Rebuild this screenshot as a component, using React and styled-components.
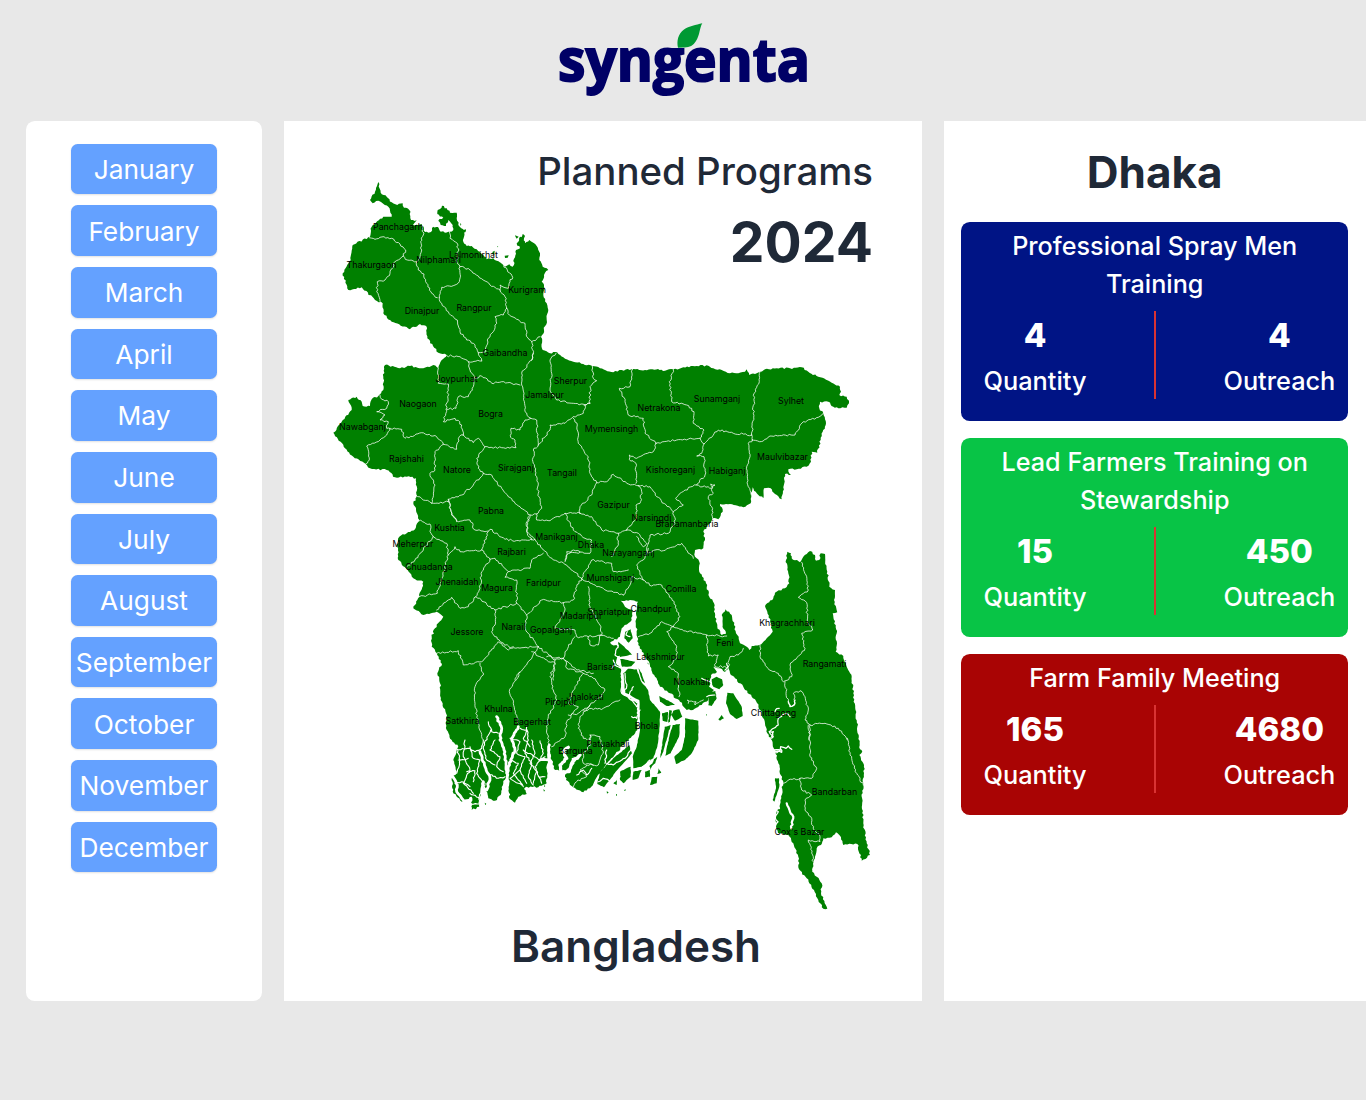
import React from "react";
import styled, { createGlobalStyle } from "styled-components";

const GlobalStyle = createGlobalStyle`
  *, *::before, *::after { box-sizing: border-box; }
  html, body { margin: 0; padding: 0; background: #fff; }
  body {
    overflow: hidden;
    color: #1f2937;
    font-family: Inter, "Liberation Sans", sans-serif;
  }
`;

const Page = styled.div`
  width: 1366px;
  height: 1100px;
  overflow: hidden;
  background: #e8e8e8;
`;

const Header = styled.header`
  height: 121px;
  padding-top: 10px;
  display: flex;
  justify-content: center;
`;

const LogoSvg = styled.svg`
  display: block;
  width: 290px;
  height: 100px;
  margin-left: 4px;
`;

const LogoText = styled.text`
  font-family: "Open Sans", "Noto Sans", sans-serif;
  font-weight: 700;
  font-size: 59px;
  fill: #000066;
  stroke: #000066;
  stroke-width: 2px;
`;

const Columns = styled.main`
  display: grid;
  grid-template-columns: 236px 638px 422px;
  column-gap: 22px;
  height: 880px;
  margin-left: 26px;
`;

const Sidebar = styled.nav`
  display: flex;
  flex-direction: column;
  align-items: center;
  gap: 11px;
  padding-top: 22.8px;
  background: #fff;
  border-radius: 8.8px;
`;

const MonthButton = styled.button`
  flex: none;
  width: 146px;
  height: 50.64px;
  padding: 0.8px 0 0;
  border: 0;
  border-radius: 6.6px;
  background: #64a1ff;
  color: #fff;
  font-family: inherit;
  font-size: 26.3px;
  font-weight: 400;
  line-height: 35.2px;
  box-shadow: 0 1px 2px rgba(0, 0, 0, 0.12);
`;

const MapPanel = styled.section`
  display: grid;
  grid-template-columns: 1fr;
  grid-template-rows: 155px 1fr;
  background: #fff;
`;

const PanelHeading = styled.div`
  grid-area: 1 / 1;
  z-index: 1;
  padding: 24px 49px 0 0;
  text-align: right;
`;

const Title = styled.div`
  font-size: 38.4px;
  font-weight: 500;
  line-height: 52px;
`;

const Year = styled.div`
  margin-top: 12px;
  font-size: 55.2px;
  font-weight: 700;
  line-height: 66px;
`;

const MapSvg = styled.svg`
  grid-area: 1 / 1 / span 2 / 1;
  display: block;
  width: 560px;
  height: 750px;
  margin: 49px 0 0 36px;
`;

const Land = styled.path`
  fill: #008000;
`;

const Border = styled.path`
  fill: none;
  stroke: #fff;
  stroke-width: ${(p) => p.$width || 0.85}px;
  stroke-opacity: ${(p) => (p.$width ? 1 : 0.9)};
  stroke-linejoin: round;
  stroke-linecap: round;
`;

const District = styled.text`
  fill: #000;
  font-family: Inter, sans-serif;
  font-size: 8.8px;
  text-anchor: middle;
`;

const Country = styled.div`
  grid-area: 2 / 1;
  align-self: end;
  z-index: 1;
  padding: 0 0 25px 66px;
  font-size: 44px;
  font-weight: 600;
  line-height: 60px;
  text-align: center;
`;

const Summary = styled.aside`
  display: flex;
  flex-direction: column;
  gap: 17px;
  padding: 21px 17.6px 0 17px;
  background: #fff;
`;

const Division = styled.h1`
  margin: 0;
  height: 63px;
  font-size: 44px;
  font-weight: 700;
  line-height: 61px;
  text-align: center;
`;

const Card = styled.article`
  padding: 5px 13px 22px;
  border-radius: 8.8px;
  background: ${(p) => p.$color};
  color: #fff;
`;

const CardTitle = styled.h2`
  margin: 0 auto;
  max-width: 340px;
  font-size: 25.2px;
  font-weight: 500;
  line-height: 38px;
  text-align: center;
`;

const Stats = styled.div`
  display: grid;
  grid-template-columns: 1fr 2px 1fr;
  grid-template-rows: 88px;
  justify-items: start;
  height: 88px;
  margin: 8px 0 0 1px;
`;

const Divider = styled.i`
  width: 2px;
  background: #d93333;
`;

const Stat = styled.div`
  display: flex;
  flex-direction: column;
  align-items: center;
  width: ${(p) => p.$width}px;
  justify-self: ${(p) => p.$side};
  padding-top: 2px;
  font-size: 25.3px;
  font-weight: 500;
  line-height: 45px;

  strong {
    font-size: 33px;
    font-weight: 800;
    line-height: 45px;
  }
`;

const MONTHS = ["January", "February", "March", "April", "May", "June", "July",
  "August", "September", "October", "November", "December"];

const PROGRAMS = [
  { title: "Professional Spray Men Training", color: "#001485", quantity: 4, outreach: 4 },
  { title: "Lead Farmers Training on Stewardship", color: "#08c446", quantity: 15, outreach: 450 },
  { title: "Farm Family Meeting", color: "#a90404", quantity: 165, outreach: 4680 },
];

const MAINLAND = `378.3,182 380.7,192.7 386.7,196.7 391.7,202.3 397.3,205 402.7,203.3 404,207.7 409.3,210 411,220 416.7,220
413,225 418,225 421.7,224 424,227 425,232 428.3,232.7 431,232 433,226.7 438,227 440.7,231.7 445,232.7 450,231.7 453.3,230 452.7,225
448.3,220 446,226 440.7,225 438.3,220.7 443.3,217.7 437.3,214 437.7,210 440,209 442,205.7 446.7,208.3 450,212.7 456.7,212.7
456.7,218.3 458.3,225 463.3,229.3 464,236.7 463.3,241.7 466.7,246 471.7,246 476.7,249.3 483.3,255 486.7,259.3 493.3,258.3
496.7,260.7 501.7,263.3 505,266.7 509.3,264.3 512.7,266.7 515,257.3 516,250 520,248.3 516.7,243.3 520,236.7 524,238.3
525,243.3 529.3,240 533.3,242.7 536.7,246 540,253.3 539.3,260 542.7,266.7 548.3,270 544,275 541.7,281.7 544,286.7 543.3,295
546.7,303.3 548.3,310 546.7,320 544,330 541,337 542.7,350 550,353.3 555,352 563.3,357.3 573.3,361.7 583.3,364 592.3,366
600,368.3 613.3,372.3 621.7,370 631.7,369.3 645,370 658,369 665,370.7 673.3,369.3 683.3,367.3 696.7,366 708.3,365.7
713.3,368.3 721.7,370 730,373.3 738.3,373.3 745,371.7 746.7,369.3 749.3,375 755,374 760,371.7 765,369.3 776.7,368.3 790,368.3
801.7,367.3 808.3,371.7 818.3,376.7 831.7,382.7 840,386.7 841,391.7 839.3,395 846.7,396.7 849,403.3 846.7,407.7 838.3,408.3
833.3,406.7 828.3,401.7 820,401.7 819.3,408.3 823.3,413.3 826,423.3 822.7,431.7 820.7,440 817.3,452.7 811.7,451.7 811,461.7
806.7,466.7 796.7,469.3 788.3,469.3 791,475 785,474 784.3,483.3 781.7,499.3 775,494 770.7,488.3 764,488.3 763.3,498.3
756.7,493.3 752.7,487.3 751.3,495 750.7,503.3 743.3,507.3 730,504 720,504 722.7,511.7 718.3,519.3 712.7,518.3 710,523.3
703.3,531.7 705,540 703.3,548.3 695,550 695,556.7 699.3,561.7 700,573.3 706,583.3 709.3,596.7 714,603.3 715,613.3 717.3,626.7
721.7,635 725.7,634 722.7,625 721.7,615 725.7,609.3 731.7,615 734,625 737.3,635 740,643.3 746.7,646.7 749.3,650 751.7,646
759.3,645 766.7,638.3 772.7,631.7 770.7,623.3 767.3,611.7 765,606 773.3,598.3 775,592.7 785,588.3 789.3,583.3 788.3,573.3
786,560 787.3,551.7 791,553.3 791.7,558.3 800,562.3 803.3,556.7 810,551 815,555 816,560.7 819.3,560 820.7,553.3 825,554
825.3,560 827.3,571.7 829.3,586.7 835,590 834,600 837.3,612.3 832.7,613.3 836.7,633.3 835.7,651.7 843.3,656 846.7,666.7
851.7,676.7 853.3,693.3 855.5,710 857.3,726.7 860,749.3 862.3,751.7 859.3,755 864,765 863.3,785 861.7,796.7 863.3,823.3
866.7,843.3 870,855 861.7,860.7 857.3,844 843.3,845 841,837.3 836,832.3 831.7,837.3 823.3,838.3 821,845 816.7,848.3
815,856.7 812.7,871.7 816.7,876.7 821.7,883.3 821,893.3 827.3,908.8 823.3,908.8 818.3,900 814,890 806.7,878.3 799,869.3
798.3,856.7 793.3,843.3 788.3,835 778,833 776,826.7 776,816.7 778.3,806 780.7,795 783.3,783.3 780.7,775 778.3,763.3 775,750
771.7,740 767.3,733.3 765,723.3 761.7,713.3 757,703 751.7,696.7 743.3,686.7 735,678.3 730,673.3 729,667 725,672 720,668.3
713.3,666.7 717,672 711,675 709,686.7 714,690 708.3,700 701.7,705 693,710 686.7,710 680,701.7 670,693.3 660,686.7 655,676.7
650,666.7 645,656.7 638.3,645 636.7,633.3 636,613.3 638,601.7 630,600 620.7,600.7 625,606.7 632.7,610 631.7,620 621.7,628.3
620,636.7 610,642.7 618,646.7 625,653.3 617.3,656.7 616,663 621,669 621.5,693.3 629,698 636.6,701.7 637.4,716.7 637.4,730
632,736 625,743.3 610,760 601.7,770 595,780 590,788.3 583.3,792.3 573.3,787.3 566,780 565,775 573.3,765 576.7,758.3
580,755 571.7,758.3 569.3,768.3 561.7,771.7 555,770 551.7,760 549.3,746.7 547.3,760 546.7,783.3 538.3,787.3 526.7,786.7
524,789 526.7,794 518.3,796.7 515,802.7 509.3,798.3 509.3,783.3 507.3,773.3 503.3,783.3 500.7,795 495,800.7 488.3,798.3
485,783.3 480,796.7 479.3,806.7 471.7,810 471.7,796.7 461.7,801.7 452.7,791.7 451.7,778.3 456.7,773.3 453.3,760 458.3,746.7
451.7,740 446.7,730 446,713.3 440.7,700 440,683.3 437.3,673.3 442,664 436.7,653.3 431.7,646.7 431.7,636.7 435,628.3
443.3,616.7 436.7,611.7 423.3,615 413.3,608.3 419.3,596.7 423.3,581.7 413.3,578.3 406,568.3 398.3,560 397.3,546.7 399.3,536.7
406.7,533.3 415,529.3 419.3,520 416,510 413.3,503.3 416.7,496.7 416,478.3 406.7,476.7 395,477.3 386.7,470 370,468.3
365.7,464 353.3,456.7 345,448.3 333.3,432.7 341.7,421.7 351.7,410 348.3,400 356.7,396.7 361.7,401.7 362.7,406 370,406
371.7,399.3 378.3,396 383.3,390 383.3,376.7 385,365 400,368.3 410,366 423.3,368.3 433.3,365 438.3,368.3 441.7,360
446.7,355 438.3,352.7 433,346 427.3,338.3 426.7,326.7 420,324 410,329.3 391.7,321.7 383.3,313.3 382.7,303.3 375,300
361.7,287.3 348.3,290 342.7,273.3 350.7,260 352.7,245 370,236.7 371.7,226.7 383.3,216.7 391.7,216.7 388.3,206.7
378.3,200.7 372.7,203.3 370,200 375,191.7`;

/* Map sheets: coordinates are thirds of a pixel measured from each sheet's origin. */
const ISLANDS = [
  { x: 570, y: 590, lines: [
    "174,236 200,238 214,275 234,300 240,330 270,365 268,420 262,470 250,505 215,530 190,535 188,500 200,470 210,420 208,330 166,308 160,250",
    "345,385 385,392 385,450 365,490 345,510 318,522 313,500 335,480 345,440",
    "308,405 330,402 327,440 302,490 286,497 298,440",
    "284,410 302,405 291,445 280,485 270,505 280,442",
    "268,318 300,335 315,345 290,348 270,335", "310,362 328,358 337,380 315,392 304,375", "276,370 294,366 292,396 278,392",
    "298,360 306,362 300,395 295,398", "262,500 256,520 244,530 252,508",
    "178,465 186,490 142,540 102,592 82,582 90,545 130,505",
    "190,545 215,540 205,565 188,570", "245,562 262,560 260,580 240,585", "266,535 274,548 262,552", "225,545 240,540 240,560 225,562",
    "150,545 182,530 182,560 160,580 150,570", "130,580 142,565 140,585", "238,528 250,518 242,540",
    "472,308 490,310 515,350 518,378 500,387 480,372 468,340",
    "436,303 440,325 425,348 415,346 417,320 425,305", "455,375 462,385 450,392 445,388",
    "425,268 440,260 456,268 460,285 448,298 426,290",
    "166,125 182,118 188,145 176,158 163,145", "145,155 163,170 186,194 150,201 145,178", "150,206 196,215 184,229 156,230",
    "205,235 215,250 225,280 216,272", "408,372 411,374 409,378", "162,600 168,598 165,604", "138,612 141,614 138,617",
  ]},
  { x: 740, y: 700, lines: ["105,235 117,235 118,260 103,305 98,300 108,265"] },
  { x: 320, y: 170, lines: [
    "428,180 438,178 436,187 429,188", "518,245 524,242 523,254 516,252", "554,257 566,256 563,263 555,264", "585,196 596,200 590,206",
    "608,192 615,198 610,212 602,206", "532,228 535,230 532,232", "420,160 424,162 422,168", "368,152 377,153 374,160 367,158",
  ]},
  { x: 420, y: 650, lines: ["194,458 199,461 196,466", "372,405 376,408 373,412", "370,418 375,421 372,425", "560,424 566,427 561,431", "588,432 591,435 588,438"] },
];

const BORDERS = [
  { x: 320, y: 170, lines: [
    "148,203 165,208 180,202 215,205 240,222 257,240 250,258 262,270 290,275",
    "305,168 310,195 302,215 305,240 300,260 290,275 295,300 312,312 320,340 335,370 352,383",
    "250,258 225,275 210,310 195,330 172,335 170,365 185,400",
    "388,185 390,205 412,220 415,265 408,270 420,290 418,335 405,345 365,352 358,383",
    "420,290 450,300 475,318 510,345 540,360",
    "545,280 562,300 578,322 570,335 565,355 540,345 540,360 555,380 560,415",
    "358,383 365,400 385,425 412,450 420,485 440,510 460,520 475,548 485,572",
    "560,415 550,435 525,440 530,460 520,485 502,510 498,545 475,548",
    "560,415 568,435 590,448 615,460 620,500 635,515 660,500",
    "635,515 640,550 635,570", "380,557 420,560 445,575 485,573",
  ]},
  { x: 320, y: 340, lines: [
    "445,65 450,90 465,110 460,140 445,170 415,170 408,205 380,208 370,245 405,235 425,255 430,285",
    "355,85 355,130 385,132 383,170 378,208", "465,115 485,108 515,130 545,125 600,135",
    "640,40 636,60 625,70 605,100 605,135 612,160 615,215 632,235",
    "430,285 460,308 475,295 495,320 545,323 588,323 585,300 572,292 573,265 600,270 615,240 632,235 650,240 652,290 655,315",
    "180,165 185,178 205,185 200,205 170,215 195,225 180,240 205,245 200,265 245,268 255,295 305,278 350,290 370,313 410,328 418,290 430,285",
    "210,265 200,285 180,300 140,318 148,360 137,372", "370,313 345,335 345,390 330,400 345,435 335,490",
    "495,320 470,355 475,385 490,400 460,435 425,465 385,478", "288,465 310,480 340,490 385,485",
    "490,400 510,403 545,445 565,470 600,500 630,525 650,522 665,505 655,460 650,410 640,370 640,330 655,315 690,270 690,255 735,250 755,235 790,220 795,195",
    "708,40 690,60 695,100 690,150 710,180 760,190 795,195 810,190",
    "385,478 395,520 410,545", "630,525 620,545 622,580 635,600", "650,522 650,540 690,542 735,520 780,520",
  ]},
  { x: 530, y: 340, lines: [
    "187,78 190,115 200,122 180,140 180,190 162,195",
    "130,235 142,255 145,310 175,350 180,400 200,428 185,465 150,500 150,520",
    "308,88 300,140 268,145 285,185 295,225 340,235 345,280 378,310",
    "430,88 418,125 425,185 470,195 492,215 490,250 522,270 510,295 440,300 378,310",
    "690,95 688,125 672,160 670,220 665,285", "510,295 522,312 565,270 610,280 665,285",
    "665,300 700,303 720,288 795,285 820,245 865,232 880,220",
    "665,285 668,300 655,310 660,350 650,380 655,440 664,465",
    "522,312 515,340 500,348 522,350 525,405 500,435 545,445 555,435 542,432 550,460 535,470 545,500 548,535",
    "378,310 370,335 320,355 298,345 298,358 318,370 318,430", "200,428 230,425 250,403 290,430 325,437",
    "325,437 360,440 380,470 430,515", "500,435 465,450 437,475 460,495 430,515 435,550 415,580 360,585 355,610",
    "325,437 335,455 330,490 318,495 320,530 290,570", "150,520 185,530 215,570 245,575 265,580 290,570",
    "105,520 130,570 165,595 185,600 180,640 110,635 105,660", "265,580 262,620 245,650",
    "290,570 325,580 350,610 340,620 320,590", "355,610 350,630 355,640 375,630 400,632 455,610 490,655",
  ]},
  { x: 380, y: 500, lines: [
    "205,0 215,45 235,65 270,60 285,90 315,95 330,88 375,118 420,123 465,118 440,95 445,50",
    "465,118 490,150 520,180 550,188 605,235 650,260 730,285", "110,60 150,72 150,95 160,108 130,150 105,180 80,200",
    "160,110 200,130 205,165 180,250 172,280 118,290", "205,165 225,140 240,155 275,152 305,150 325,95",
    "305,150 330,178 345,175 385,215 450,205 455,180 490,160",
    "330,178 305,215 300,265 288,290 265,320 240,325 215,292 170,330", "288,290 345,330 410,310 410,240 375,232 385,215",
    "345,330 345,375 335,395 360,425 395,445 475,440", "410,310 440,345 435,380 445,400 475,440",
    "440,345 485,300 550,308 555,330 525,385 585,390 590,410 625,410", "605,235 590,260 580,300 550,308",
    "625,260 630,320 660,375 665,405 625,410 630,435 655,435 660,405 700,415", "605,235 635,180 695,190 700,215 745,210",
    "555,185 560,165 580,150 600,155", "475,440 525,480 550,475 555,455 585,410", "550,475 590,510 640,520",
    "170,460 235,452 250,495 305,485 355,425 385,450 400,440", "475,440 450,480 415,520 405,540", "525,480 520,540",
  ]},
  { x: 580, y: 530, lines: [
    "205,55 190,90 170,105 190,150 155,140 150,165 130,195", "190,150 215,168 245,165 275,205 300,260 280,290",
    "175,320 210,310 245,275 280,290 300,298 380,315 440,318", "280,290 260,305 290,350 290,385 265,410 295,430 297,500",
    "380,315 385,378 415,375 405,410 445,410 450,380 475,375 490,355", "325,520 322,510 348,515 345,525 370,510",
  ]},
  { x: 710, y: 540, lines: [
    "150,315 150,350 178,390 205,400 220,425 245,410 240,375 285,325 275,280 308,270 292,240 290,188 265,172 295,150 290,110 275,67",
    "225,425 235,490 245,500 255,490 250,460 270,452 285,470 295,510 285,540 300,555 345,550 385,565 412,600", "300,555 297,600",
  ]},
  { x: 740, y: 700, lines: [
    "205,75 210,100 210,170 230,205 215,235 180,235 145,240 128,250",
    "180,235 185,270 215,285 195,300 195,330 215,355 220,385 240,410 240,425 205,420 220,470 218,515",
    "322,115 330,165 350,220 370,255",
  ]},
  { x: 420, y: 650, lines: [
    "180,40 190,75 165,110 165,160 175,220 190,270", "300,65 268,125 280,160 295,220",
    "335,5 380,30 405,40 390,80 400,120 410,150 385,200 380,240 388,290",
    "435,30 440,55 490,70 465,110 445,160 475,170 440,215 435,260 395,290",
    "490,70 515,80 555,120 545,140 510,165 480,200 475,235 490,265 510,270", "490,180 550,175 600,150",
    "445,195 475,190 510,165", "510,270 510,255 540,260 550,310 535,345 500,345 480,360 500,380 470,395 460,410",
    "510,255 512,285 490,310 490,340 520,345", "380,20 430,25",
  ]},
];

const RIVERS = [
  { x: 420, y: 650, width: 1.1, lines: [
    "110,290 120,330 110,370", "135,270 130,320 150,360 130,400 160,430", "150,290 160,325 180,330 170,370 195,400",
    "115,330 145,325", "105,400 125,395 150,410", "110,300 145,295 165,305 185,295 190,270", "205,215 215,245 235,250", "212,240 190,290 200,330 225,345",
    "225,270 210,300 240,320 230,350 250,365", "205,370 235,385 255,380", "140,365 165,362 160,395", "195,400 178,440 180,470",
    "270,265 300,275 290,310 315,320 300,360 320,400", "285,310 270,330 295,340 280,370 310,410", "320,230 325,270 315,310 335,340 325,380 340,405",
    "360,272 370,310 345,350 365,400", "335,270 345,310 330,340 350,365 340,400", "300,360 270,385 295,400 305,405", "310,300 360,330 375,320", "355,380 375,380",
    "300,235 320,240 310,265 330,290", "470,375 490,360 500,375 515,355", "150,430 180,445", "155,463 178,462",
  ]},
  { x: 420, y: 650, width: 2.8, lines: [
    "230,200 245,235 240,270 252,300 258,340 262,380 258,400", "295,230 275,265 285,300 265,350 262,380",
    "180,305 195,350 210,385 200,420", "98,380 112,405 110,425 130,450", "190,395 185,430", "388,285 385,330 360,330",
  ]},
  { x: 420, y: 650, width: 3.2, lines: ["480,315 455,340 448,365 425,370", "445,292 430,305 440,325 420,345 425,365"] },
  { x: 570, y: 590, width: 1.2, lines: [
    "145,165 135,195 150,205 190,200", "135,225 155,235 155,310 190,330 205,340", "130,210 135,225 125,235", "165,250 170,290 160,310", "110,520 130,525 170,500 185,470",
    "110,480 105,520", "190,290 175,320 200,350", "185,540 215,535 240,510", "180,140 168,135 172,125",
    "215,205 235,215 240,235", "395,265 420,275 428,290", "85,575 100,565 130,575 150,560", "410,320 435,315", "185,380 200,385 210,360",
  ]},
  { x: 710, y: 540, width: 1.2, lines: ["240,530 228,520 205,535 205,555 178,575 190,590 172,598", "195,515 200,506 208,505", "45,390 55,380 50,370"] },
  { x: 740, y: 700, width: 1.3, lines: [
    "165,0 163,15 150,20 145,5", "95,110 100,95 88,95", "103,150 122,150 110,158", "105,155 125,157 122,140 138,145 145,138 155,148",
    "115,320 108,330 115,335 106,355 114,365 106,375",
  ]},
  { x: 740, y: 700, width: 2.2, lines: ["124,270 118,300 117,325", "140,310 150,335 160,350 154,385"] },
];

const DISTRICTS = [
  ["Panchagarh", 398, 230], ["Thakurgaon", 371.5, 268], ["Nilphamari", 438.5, 263], ["Lalmonirhat", 473.5, 258],
  ["Kurigram", 527, 293], ["Rangpur", 474, 311], ["Dinajpur", 422, 314], ["Gaibandha", 505, 356],
  ["Joypurhat", 456.5, 382], ["Naogaon", 418, 407], ["Bogra", 490.5, 417], ["Jamalpur", 544.5, 398],
  ["Sherpur", 570.5, 384], ["Nawabganj", 362.5, 430], ["Rajshahi", 406.5, 462], ["Natore", 457, 473],
  ["Sirajganj", 516, 471], ["Tangail", 562, 476], ["Mymensingh", 611.5, 432], ["Netrakona", 659, 411],
  ["Sunamganj", 717, 402], ["Sylhet", 791, 404], ["Maulvibazar", 782.5, 460], ["Habiganj", 727, 474],
  ["Kishoreganj", 670.5, 473], ["Gazipur", 613.5, 508], ["Narsingdi", 651.5, 521], ["Brahamanbaria", 687, 527],
  ["Pabna", 491, 514], ["Kushtia", 449.5, 531], ["Meherpur", 413, 547], ["Manikganj", 556.5, 540],
  ["Dhaka", 591, 548], ["Narayanganj", 628.5, 556], ["Rajbari", 511.5, 555], ["Chuadanga", 429, 570],
  ["Jhenaidah", 457, 585], ["Magura", 497, 591], ["Faridpur", 543.5, 586], ["Munshiganj", 610.5, 581],
  ["Comilla", 681, 592], ["Shariatpur", 609, 615], ["Madaripur", 581, 619], ["Chandpur", 651, 612],
  ["Jessore", 467, 635], ["Narail", 513.5, 630], ["Gopalganj", 551, 633], ["Feni", 725, 646],
  ["Khagrachhari", 787, 626], ["Rangamati", 824.5, 667], ["Barisal", 601, 670], ["Lakshmipur", 660.5, 660],
  ["Noakhali", 691.5, 685], ["Jhalokati", 585, 700], ["Pirojpur", 561, 705], ["Khulna", 498.5, 712],
  ["Satkhira", 462.5, 724], ["Bagerhat", 532, 725], ["Bhola", 646.5, 729], ["Patuakhali", 608, 747],
  ["Barguna", 575.5, 754], ["Chittagong", 773.5, 716], ["Bandarban", 834.5, 795], ["Cox's Bazar", 799.5, 835],
];

const parse = (line, ox = 0, oy = 0, scale = 1) =>
  line.trim().split(/\s+/).map((pair) => {
    const [px, py] = pair.split(",").map(Number);
    return [ox + px * scale, oy + py * scale];
  });

/* Breaks straight runs into short wobbling steps so shores and borders read as surveyed lines. */
function rough(points, closed, amount) {
  const noise = (x, y) => {
    const v = Math.sin(x * 12.9898 + y * 78.233) * 43758.5453;
    return (v - Math.floor(v) - 0.5) * 2;
  };
  const out = [];
  const count = closed ? points.length : points.length - 1;
  for (let i = 0; i < count; i += 1) {
    const [ax, ay] = points[i];
    const [bx, by] = points[(i + 1) % points.length];
    const length = Math.hypot(bx - ax, by - ay) || 1;
    const steps = Math.max(1, Math.round(length / 2));
    for (let s = 0; s < steps; s += 1) {
      const t = s / steps;
      const x = ax + (bx - ax) * t;
      const y = ay + (by - ay) * t;
      const n = s === 0 ? 0 : noise(Math.round(x * 3), Math.round(y * 3)) * amount;
      out.push([x - ((by - ay) / length) * n, y + ((bx - ax) / length) * n]);
    }
  }
  if (!closed) out.push(points[points.length - 1]);
  return `M${out.map(([x, y]) => `${x.toFixed(1)} ${y.toFixed(1)}`).join("L")}${closed ? "Z" : ""}`;
}

const sheetPath = (sheet, closed, amount) =>
  sheet.lines.map((line) => rough(parse(line, sheet.x, sheet.y, 1 / 3), closed, amount)).join("");

function BangladeshMap() {
  return (
    <MapSvg viewBox="320 170 560 750" role="img" aria-label="Bangladesh">
      <Land d={rough(parse(MAINLAND), true, 0.9)} />
      {ISLANDS.map((sheet, i) => <Land key={i} d={sheetPath(sheet, true, 0.3)} />)}
      {BORDERS.map((sheet, i) => <Border key={i} d={sheetPath(sheet, false, 1)} />)}
      {RIVERS.map((sheet, i) => <Border key={i} $width={sheet.width} d={sheetPath(sheet, false, 0.7)} />)}
      {DISTRICTS.map(([name, x, y]) => <District key={name} x={x} y={y}>{name}</District>)}
    </MapSvg>
  );
}

function Logo() {
  return (
    <LogoSvg viewBox="0 0 290 100" role="img" aria-label="syngenta">
      <LogoText x="18" y="71" textLength="252" lengthAdjust="spacingAndGlyphs">syngenta</LogoText>
      <path d="M138 37.8C136.5 31 138 24 144 19.5C149 16 156 15 162.3 13.3C159.5 18 160 25 156 31C153 36 149 37.8 143 37.4Z" fill="#009933" />
    </LogoSvg>
  );
}

export default function App() {
  return (
    <Page>
      <GlobalStyle />
      <Header><Logo /></Header>
      <Columns>
        <Sidebar>
          {MONTHS.map((month) => <MonthButton key={month}>{month}</MonthButton>)}
        </Sidebar>
        <MapPanel>
          <PanelHeading>
            <Title>Planned Programs</Title>
            <Year>2024</Year>
          </PanelHeading>
          <BangladeshMap />
          <Country>Bangladesh</Country>
        </MapPanel>
        <Summary>
          <Division>Dhaka</Division>
          {PROGRAMS.map((program) => (
            <Card key={program.title} $color={program.color}>
              <CardTitle>{program.title}</CardTitle>
              <Stats>
                <Stat $width={120} $side="start"><strong>{program.quantity}</strong>Quantity</Stat>
                <Divider />
                <Stat $width={112} $side="end"><strong>{program.outreach}</strong>Outreach</Stat>
              </Stats>
            </Card>
          ))}
        </Summary>
      </Columns>
    </Page>
  );
}
